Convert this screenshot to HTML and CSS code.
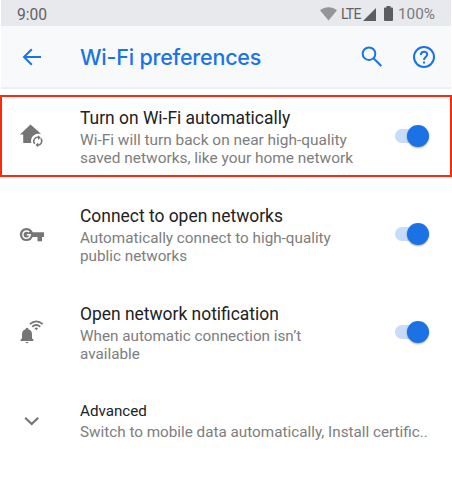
FILE: index.html
```html
<!DOCTYPE html>
<html lang="en">
<head>
<meta charset="utf-8">
<title>Wi-Fi preferences</title>
<link rel="stylesheet" href="styles.css">
</head>
<body>
<div class="status">
  <span class="clock">9:00</span>
  <svg class="wifi" width="17" height="14" viewBox="0 0 17 14"><path d="M0 3.2C5-.9 12-.9 17 3.2L8.5 13.5Z"/></svg>
  <span class="lte">LTE</span>
  <svg class="signal" width="13" height="13" viewBox="0 0 13 13"><path d="M13 0V13H0Z"/></svg>
  <svg class="battery" width="9" height="15" viewBox="0 0 9 15"><path d="M2.5 0H6.5V1.5H8Q9 1.5 9 2.5V14Q9 15 8 15H1Q0 15 0 14V2.5Q0 1.5 1 1.5H2.5Z"/></svg>
  <span class="percent">100%</span>
</div>
<header class="appbar">
  <svg class="back" width="20" height="18" viewBox="0 0 20 18"><path d="M19 9H2.5M9.8 1.2L2 9L9.8 16.8"/></svg>
  <h1>Wi-Fi preferences</h1>
  <svg class="search" width="22" height="22" viewBox="0 0 22 22"><circle cx="8" cy="7.7" r="6.3"/><path d="M12.5 12.2L20.3 20"/></svg>
  <svg class="help" width="24" height="24" viewBox="0 0 24 24"><circle cx="12" cy="12" r="10"/><path d="M8.9 9.9C8.9 5.6 15.2 5.6 15.2 9.6C15.2 12 12 12.2 12 15.1M12 16.4V18.6"/></svg>
</header>
<main>
  <section class="row highlight">
    <div class="icon"><svg width="26" height="26" viewBox="0 0 26 26"><path class="fill" d="M11.5 1.5L22 10.8H19.4A7 7 0 0 0 12.4 20H4.2V11.5H1Z"/><path class="thin" d="M15.8 20.8A3.8 3.8 0 0 1 19.8 14.6M21.8 15.6A3.8 3.8 0 0 1 18.1 21.8"/><path class="fill" d="M19 12.2L21.8 14.6L19 17ZM19.3 19.5L16.5 21.9L19.3 24.3Z"/></svg></div>
    <div class="text"><h2>Turn on Wi-Fi automatically</h2><p>Wi-Fi will turn back on near high-quality<br>saved networks, like your home network</p></div>
    <div class="switch"></div>
  </section>
  <section class="row">
    <div class="icon"><svg width="26" height="26" viewBox="0 0 26 26"><circle class="fill" cx="7.5" cy="13.5" r="6.6"/><path class="fill" d="M12 11.3H25V15.9H23V20.2H18.5V15.9H12Z"/><path class="g" d="M10.2 11.1A3.7 3.7 0 1 0 11.2 13.8H7.8"/></svg></div>
    <div class="text"><h2>Connect to open networks</h2><p>Automatically connect to high-quality<br>public networks</p></div>
    <div class="switch"></div>
  </section>
  <section class="row">
    <div class="icon lowered"><svg width="26" height="26" viewBox="0 0 26 26"><path class="fill" d="M6.6 9.3V8.5Q8 7 9.4 8.5V9.3Q13 10.3 13 14.2V18.2L14.4 19.8V21H1.6V19.8L3 18.2V14.2Q3 10.3 6.6 9.3ZM6.3 22H9.7Q8 24.7 6.3 22Z"/><path class="arc" d="M10.9 4.2Q17.3-1.5 23.7 4.2M13.3 6.8Q17.3 3.3 21.3 6.8"/><path class="fill" d="M15.4 8.2Q17.3 6.8 19.2 8.2L17.3 10.2Z"/></svg></div>
    <div class="text"><h2>Open network notification</h2><p>When automatic connection isn’t<br>available</p></div>
    <div class="switch"></div>
  </section>
  <section class="row advanced">
    <div class="icon"><svg width="26" height="26" viewBox="0 0 26 26"><path class="chevron" d="M6.2 9.8L12.7 16L19.2 9.8"/></svg></div>
    <div class="text"><h2>Advanced</h2><p>Switch to mobile data automatically, Install certific..</p></div>
  </section>
</main>
</body>
</html>
```

FILE: styles.css
```css
* { box-sizing: border-box; }
body { margin: 0; background: #fff; font-family: Roboto, sans-serif; width: 452px; height: 477px; overflow: hidden; }
svg { display: block; flex: none; }
h1, h2, p { margin: 0; font-weight: 400; white-space: nowrap; }
.status { height: 26px; margin: 0 1px; padding: 2px 15px 0 16px; display: flex; align-items: center; background: #e8e9ed; color: #616265; }
.clock { font-size: 15.6px; line-height: 24px; padding-top: 1px; flex: 1; }
.wifi { fill: #949597; margin-right: 4px; }
.lte { font-size: 14px; width: 19px; margin-right: 3px; letter-spacing: -.8px; }
.signal { fill: #5c5d60; margin-right: 8px; }
.battery { fill: #5c5d60; margin-right: 5px; margin-top: -1px; }
.percent { font-size: 15.3px; width: 38px; color: #78797c; }
.appbar { height: 63px; margin: 0 1px; padding-left: 21px; display: flex; align-items: center; background: #f8f9fb; border-bottom: 2px solid #eeeeef; }
.appbar svg { fill: none; stroke: #1a73e8; stroke-width: 2; }
h1 { font-family: Inter, sans-serif; font-weight: 500; font-size: 21.5px; letter-spacing: -.22px; line-height: 30px; color: #1a73e8; width: 281px; margin-left: 38px; }
.help { margin-left: 29px; }
main { padding-top: 6px; }
.row { height: 82px; margin-bottom: 16px; padding: 0 23px 0 19px; border: 0 solid #fa2a0b; display: flex; align-items: center; }
.highlight { border-width: 2px; padding: 0 21px 0 17px; }
.icon { width: 61px; flex: none; }
.lowered { padding-top: 2px; }
.fill { fill: #757575; }
.thin { fill: none; stroke: #757575; stroke-width: 1.5; }
.arc { fill: none; stroke: #757575; stroke-width: 1.8; }
.g { fill: none; stroke: #fff; stroke-width: 1.5; }
.chevron { fill: none; stroke: #757575; stroke-width: 2.2; }
.text { flex: 1; min-width: 0; padding-top: 2px; }
h2 { font-size: 17.43px; line-height: 22px; color: #202124; }
p { font-size: 15.25px; line-height: 18px; color: #7d7d7d; margin-top: 2px; }
.highlight p { font-size: 15.43px; }
.switch { width: 34px; height: 14px; border-radius: 7px; background: #c6dcf9; display: flex; align-items: center; justify-content: flex-end; }
.switch::after { content: ""; width: 22px; height: 22px; border-radius: 50%; background: #1b72e5; box-shadow: 0 1px 2px #0005; flex: none; }
.advanced { margin-top: -9px; margin-bottom: 0; }
.advanced .text { padding-top: 0; }
.advanced h2 { font-size: 15.2px; line-height: 20px; }
```
